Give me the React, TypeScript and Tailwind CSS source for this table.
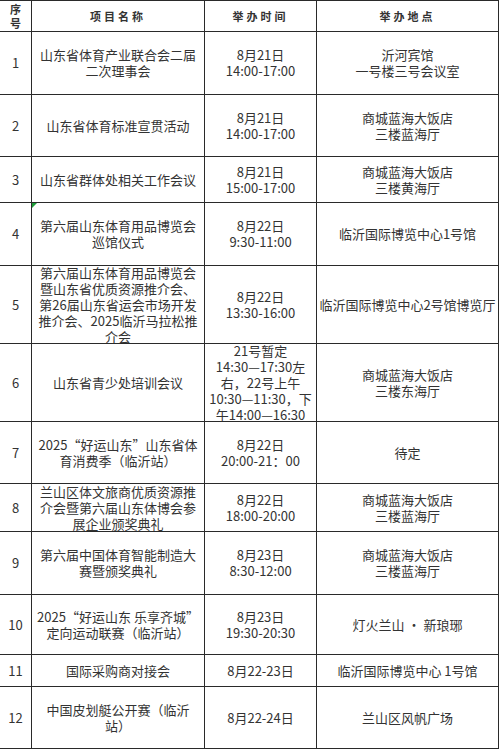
type Row = {
  no: string;
  name: string[];
  time: string[];
  place: string[];
  h: string;
  mark?: boolean;
};

const rows: Row[] = [
  { no: "1", h: "h-[63px]", name: ["山东省体育产业联合会二届", "二次理事会"], time: ["8月21日", "14:00-17:00"], place: ["沂河宾馆", "一号楼三号会议室"] },
  { no: "2", h: "h-[62px]", name: ["山东省体育标准宣贯活动"], time: ["8月21日", "14:00-17:00"], place: ["商城蓝海大饭店", "三楼蓝海厅"] },
  { no: "3", h: "h-[46px]", name: ["山东省群体处相关工作会议"], time: ["8月21日", "15:00-17:00"], place: ["商城蓝海大饭店", "三楼黄海厅"] },
  { no: "4", h: "h-[63px]", mark: true, name: ["第六届山东体育用品博览会", "巡馆仪式"], time: ["8月22日", "9:30-11:00"], place: ["临沂国际博览中心1号馆"] },
  {
    no: "5",
    h: "h-[78px]",
    name: ["第六届山东体育用品博览会", "暨山东省优质资源推介会、", "第26届山东省运会市场开发", "推介会、2025临沂马拉松推", "介会"],
    time: ["8月22日", "13:30-16:00"],
    place: ["临沂国际博览中心2号馆博览厅"],
  },
  {
    no: "6",
    h: "h-[78px]",
    name: ["山东省青少处培训会议"],
    time: ["21号暂定", "14:30—17:30左", "右，22号上午", "10:30—11:30，下", "午14:00—16:30"],
    place: ["商城蓝海大饭店", "三楼东海厅"],
  },
  { no: "7", h: "h-[62px]", name: ["2025“好运山东”山东省体", "育消费季（临沂站）"], time: ["8月22日", "20:00-21：00"], place: ["待定"] },
  { no: "8", h: "h-[48px]", name: ["兰山区体文旅商优质资源推", "介会暨第六届山东体博会参", "展企业颁奖典礼"], time: ["8月22日", "18:00-20:00"], place: ["商城蓝海大饭店", "三楼蓝海厅"] },
  { no: "9", h: "h-[63px]", name: ["第六届中国体育智能制造大", "赛暨颁奖典礼"], time: ["8月23日", "8:30-12:00"], place: ["商城蓝海大饭店", "三楼蓝海厅"] },
  { no: "10", h: "h-[60px]", name: ["2025“好运山东 乐享齐城”", "定向运动联赛（临沂站）"], time: ["8月23日", "19:30-20:30"], place: ["灯火兰山 · 新琅琊"] },
  { no: "11", h: "h-[32px]", name: ["国际采购商对接会"], time: ["8月22-23日"], place: ["临沂国际博览中心 1号馆"] },
  { no: "12", h: "h-[62px]", name: ["中国皮划艇公开赛（临沂", "站）"], time: ["8月22-24日"], place: ["兰山区风帆广场"] },
];

const Lines = ({ lines }: { lines: string[] }) => (
  <div className="flex flex-col items-center">
    {lines.map((l, i) => (
      <span key={i} className="whitespace-nowrap leading-[16px]">
        {l}
      </span>
    ))}
  </div>
);

const cell =
  "flex items-center justify-center overflow-hidden border-r border-b border-[#2a2a2a] text-center";

const App = () => {
  return (
    <div
      className="w-[500px] h-[749px] bg-white text-[13px] text-[#333] overflow-hidden"
      style={{ fontFamily: '"Noto Sans CJK SC", "Noto Sans", sans-serif' }}
    >
      <div className="w-[499px] border-t border-[#2a2a2a]">
        {/* header */}
        <div className="grid grid-cols-[32px_173px_112px_182px] h-[31px] font-bold text-[11px] text-[#333]">
          <div className={cell}>
            <div className="flex flex-col leading-[14px]">
              <span>序</span>
              <span>号</span>
            </div>
          </div>
          <div className={cell}>
            <span className="tracking-[3px]">项目名称</span>
          </div>
          <div className={cell}>
            <span className="tracking-[3px]">举办时间</span>
          </div>
          <div className={cell}>
            <span className="tracking-[3px]">举办地点</span>
          </div>
        </div>

        {rows.map((r) => (
          <div
            key={r.no}
            className={`grid grid-cols-[32px_173px_112px_182px] ${r.h}`}
          >
            <div className={cell}>{r.no}</div>
            <div className={`${cell} relative`}>
              {r.mark && (
                <svg
                  className="absolute left-0 top-0"
                  width="5"
                  height="5"
                  viewBox="0 0 5 5"
                >
                  <polygon points="0,0 5,0 0,5" fill="#1f9d3a" />
                </svg>
              )}
              <Lines lines={r.name} />
            </div>
            <div className={cell}>
              <Lines lines={r.time} />
            </div>
            <div className={cell}>
              <Lines lines={r.place} />
            </div>
          </div>
        ))}
      </div>
    </div>
  );
};

export default App;
